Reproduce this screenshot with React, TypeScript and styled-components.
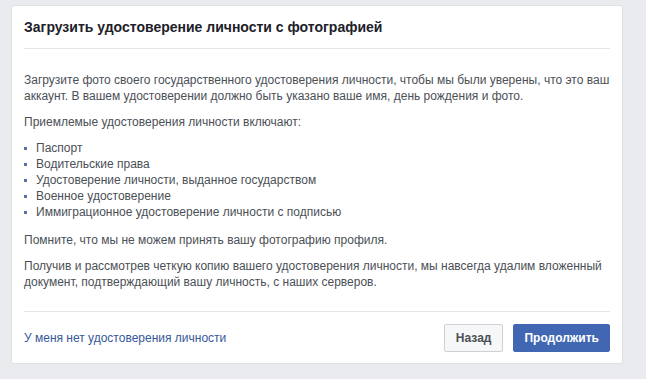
import React from "react";
import styled, { createGlobalStyle } from "styled-components";

const GlobalStyle = createGlobalStyle`
  html, body {
    margin: 0;
    padding: 0;
    background: #e9ebee;
  }
  body {
    font-family: "Liberation Sans", Arial, Helvetica, sans-serif;
    font-size: 12px;
    color: #4b4f56;
  }
`;

const Page = styled.div`
  padding: 5px 0 16px 11px;
`;

const Card = styled.div`
  width: 612px;
  box-sizing: border-box;
  background: #fff;
  border: 1px solid #dddfe2;
  border-radius: 3px;
`;

const Header = styled.div`
  margin: 0 12px;
  padding: 12px 0;
  border-bottom: 1px solid #e5e5e5;
`;

const Title = styled.h2`
  margin: 0;
  font-size: 14px;
  line-height: 18px;
  font-weight: bold;
  color: #1d2129;
`;

const Body = styled.div`
  margin: 0 12px;
  padding: 23px 0 21px;
  display: flex;
  flex-direction: column;
  gap: 10px;
  line-height: 16px;
`;

const Paragraph = styled.p`
  margin: 0;
`;

const List = styled.ul`
  margin: 0 0 2px;
  padding: 0;
  list-style: none;
`;

const Item = styled.li`
  position: relative;
  padding-left: 12px;
  &::before {
    content: "";
    position: absolute;
    left: 0;
    top: 7px;
    width: 3px;
    height: 3px;
    background: #5b6f9d;
  }
`;

const Footer = styled.div`
  margin: 0 12px;
  padding: 12px 0 11px;
  border-top: 1px solid #e5e5e5;
  display: flex;
  align-items: center;
  justify-content: space-between;
`;

const Link = styled.a`
  color: #365899;
  text-decoration: none;
  cursor: pointer;
`;

const Actions = styled.div`
  display: flex;
  gap: 10px;
`;

const Button = styled.button<{ $primary?: boolean }>`
  height: 28px;
  padding: 0 ${(p) => (p.$primary ? "10px" : "11px")};
  box-sizing: border-box;
  border-radius: 2px;
  font-family: inherit;
  font-size: 12px;
  font-weight: bold;
  cursor: pointer;
  border: 1px solid ${(p) => (p.$primary ? "#4267b2" : "#ced0d4")};
  background: ${(p) => (p.$primary ? "#4267b2" : "#f6f7f9")};
  color: ${(p) => (p.$primary ? "#fff" : "#4b4f56")};
`;

const ids = [
  "Паспорт",
  "Водительские права",
  "Удостоверение личности, выданное государством",
  "Военное удостоверение",
  "Иммиграционное удостоверение личности с подписью",
];

export default function App() {
  return (
    <>
      <GlobalStyle />
      <Page>
        <Card>
          <Header>
            <Title>Загрузить удостоверение личности с фотографией</Title>
          </Header>
          <Body>
            <Paragraph>
              Загрузите фото своего государственного удостоверения личности, чтобы мы были уверены, что это ваш аккаунт. В вашем удостоверении должно быть указано ваше имя, день рождения и фото.
            </Paragraph>
            <Paragraph>Приемлемые удостоверения личности включают:</Paragraph>
            <List>
              {ids.map((t) => (
                <Item key={t}>{t}</Item>
              ))}
            </List>
            <Paragraph>Помните, что мы не можем принять вашу фотографию профиля.</Paragraph>
            <Paragraph>
              Получив и рассмотрев четкую копию вашего удостоверения личности, мы навсегда удалим вложенный документ, подтверждающий вашу личность, с наших серверов.
            </Paragraph>
          </Body>
          <Footer>
            <Link>У меня нет удостоверения личности</Link>
            <Actions>
              <Button>Назад</Button>
              <Button $primary>Продолжить</Button>
            </Actions>
          </Footer>
        </Card>
      </Page>
    </>
  );
}
